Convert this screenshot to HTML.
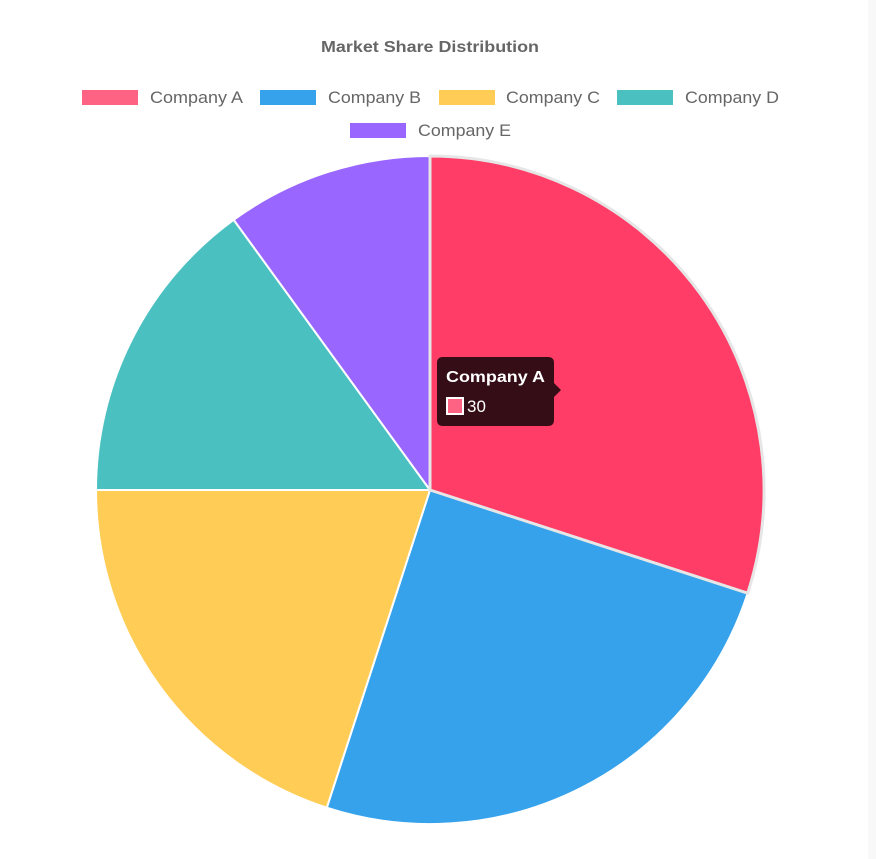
<!DOCTYPE html>
<html><head><meta charset="utf-8"><style>
html,body{margin:0;padding:0;width:876px;height:859px;background:#fff;overflow:hidden;font-family:"Liberation Sans",Arial,sans-serif}
.strip{position:absolute;left:868px;top:0;width:8px;height:859px;background:#f8f8f8}
</style></head><body>
<div class="strip"></div>
<svg width="876" height="859" style="position:absolute;left:0;top:0" font-family="Liberation Sans, Arial, sans-serif">
<text x="321" y="52" textLength="218" lengthAdjust="spacingAndGlyphs" font-size="16" font-weight="bold" fill="#666">Market Share Distribution</text>
<g font-size="17" fill="#666">
<rect x="82" y="90" width="56" height="15" fill="#ff6384"/><text x="150" y="103" textLength="93" lengthAdjust="spacingAndGlyphs">Company A</text>
<rect x="260" y="90" width="56" height="15" fill="#36a2eb"/><text x="328" y="103" textLength="93" lengthAdjust="spacingAndGlyphs">Company B</text>
<rect x="439" y="90" width="56" height="15" fill="#ffcd56"/><text x="506" y="103" textLength="94" lengthAdjust="spacingAndGlyphs">Company C</text>
<rect x="617" y="90" width="56" height="15" fill="#4bc0c0"/><text x="685" y="103" textLength="94" lengthAdjust="spacingAndGlyphs">Company D</text>
<rect x="350" y="123" width="56" height="15" fill="#9966ff"/><text x="418" y="136" textLength="93" lengthAdjust="spacingAndGlyphs">Company E</text>
</g>
<g stroke="#fff" stroke-width="2" stroke-linejoin="round">
<path d="M430,490 L747.7,593.2 A334,334 0 0 1 326.8,807.7 Z" fill="#36a2eb"/>
<path d="M430,490 L326.8,807.7 A334,334 0 0 1 96,490 Z" fill="#ffcd56"/>
<path d="M430,490 L96,490 A334,334 0 0 1 233.7,219.8 Z" fill="#4bc0c0"/>
<path d="M430,490 L233.7,219.8 A334,334 0 0 1 430,156 Z" fill="#9966ff"/>
<path d="M430,490 L430,156 A334,334 0 0 1 747.7,593.2 Z" fill="#ff3d67" stroke="#e6e6e6" stroke-width="3"/>
</g>
<path d="M443,357 H548 Q554,357 554,363 V383 L561,390 L554,397 V420 Q554,426 548,426 H443 Q437,426 437,420 V363 Q437,357 443,357 Z" fill="#340d16"/>
<text x="446" y="382" textLength="99" lengthAdjust="spacingAndGlyphs" font-size="16" font-weight="bold" fill="#fff">Company A</text>
<rect x="447" y="398" width="16" height="16" fill="#ff6384" stroke="#fff" stroke-width="2"/>
<text x="467" y="412" font-size="17" fill="#fff">30</text>
</svg>
</body></html>
